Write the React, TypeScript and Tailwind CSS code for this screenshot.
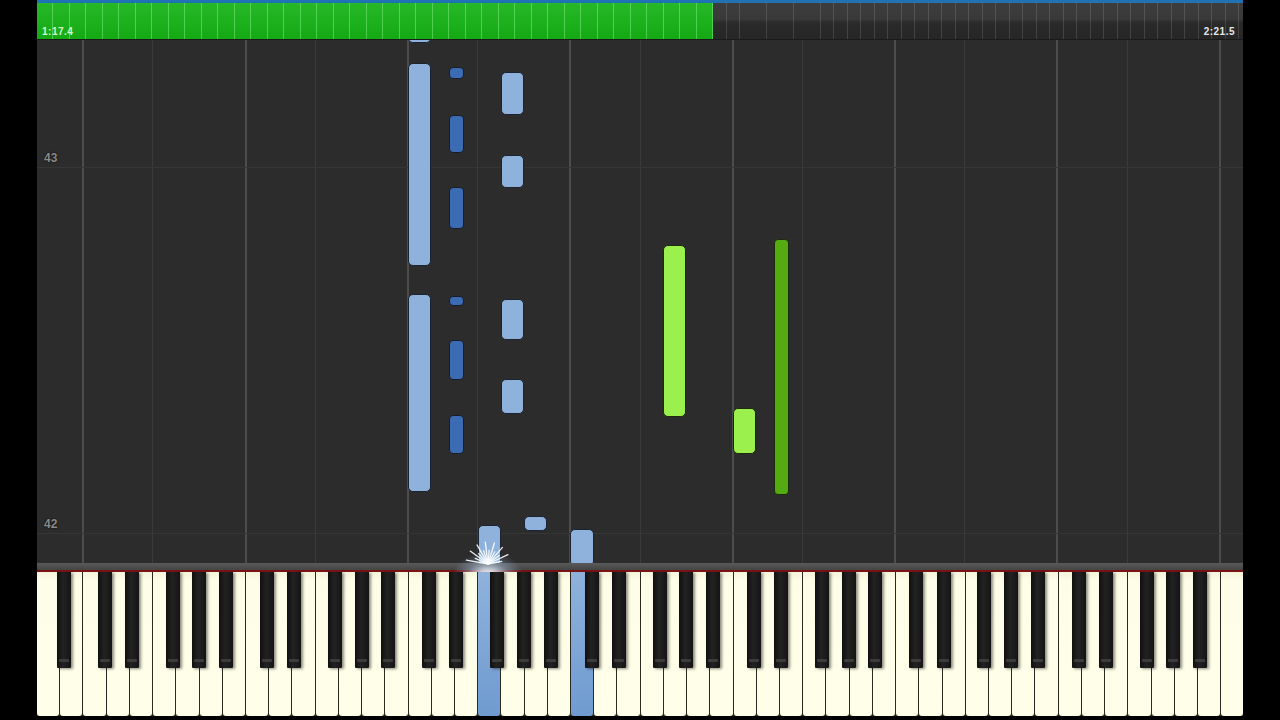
import React from "react";

const W = 1206;
const KW = W / 52;
const ROLL_TOP = 40;
const NAMES = ["A", "B", "C", "D", "E", "F", "G"];
const BLACK_OFF: Record<string, number> = { A: 3.5, C: -2, D: 2, F: -3.5, G: 0 };

type NoteDef = { kind: "white" | "black"; idx: number; top: number; bottom: number; color: string };

const LB = "light";
const DB = "dark";
const LG = "lgreen";
const DG = "dgreen";

const notes: NoteDef[] = [
  { kind: "white", idx: 16, top: 34, bottom: 43, color: LB },
  { kind: "white", idx: 16, top: 63, bottom: 266, color: LB },
  { kind: "white", idx: 16, top: 294, bottom: 492, color: LB },
  { kind: "black", idx: 17, top: 67, bottom: 79, color: DB },
  { kind: "black", idx: 17, top: 115, bottom: 153, color: DB },
  { kind: "black", idx: 17, top: 187, bottom: 229, color: DB },
  { kind: "black", idx: 17, top: 296, bottom: 306, color: DB },
  { kind: "black", idx: 17, top: 340, bottom: 380, color: DB },
  { kind: "black", idx: 17, top: 415, bottom: 454, color: DB },
  { kind: "white", idx: 20, top: 72, bottom: 115, color: LB },
  { kind: "white", idx: 20, top: 155, bottom: 188, color: LB },
  { kind: "white", idx: 20, top: 299, bottom: 340, color: LB },
  { kind: "white", idx: 20, top: 379, bottom: 414, color: LB },
  { kind: "white", idx: 19, top: 525, bottom: 566, color: LB },
  { kind: "white", idx: 21, top: 516, bottom: 531, color: LB },
  { kind: "white", idx: 23, top: 529, bottom: 566, color: LB },
  { kind: "white", idx: 27, top: 245, bottom: 417, color: LG },
  { kind: "white", idx: 30, top: 408, bottom: 454, color: LG },
  { kind: "black", idx: 31, top: 239, bottom: 495, color: DG },
];

const colorClass: Record<string, string> = {
  light: "bg-[#8fb2dc] border border-[#1b2330] rounded-[5px]",
  dark: "bg-[#3b6bb3] border border-[#161c28] rounded-[4px]",
  lgreen: "bg-[#9bf04e] border border-[#1d2a10] rounded-[5px]",
  dgreen: "bg-[#55ab12] border border-[#1b2a0c] rounded-[4px]",
};

function noteX(n: NoteDef) {
  if (n.kind === "white") return { left: n.idx * KW, width: KW };
  const c = (n.idx + 1) * KW + BLACK_OFF[NAMES[n.idx % 7]];
  return { left: c - 7.5, width: 15 };
}

const cLines = [0, 1, 2, 3, 4, 5, 6, 7].map((k) => (2 + 7 * k) * KW);
const fLines = [0, 1, 2, 3, 4, 5, 6, 7].map((k) => (5 + 7 * k) * KW).filter((x) => x < W);

const pressed = new Set([19, 23]);

function TopBar() {
  return (
    <div className="flex flex-col h-[40px]">
      <div className="h-[3px] bg-[#1f72b3]" />
      <div className="flex h-[36px]">
        <div className="relative w-[676px] h-full bg-[linear-gradient(#27b827,#14aa14)]">
          <div className="absolute inset-0 bg-[repeating-linear-gradient(90deg,transparent_0px,transparent_15.5px,rgba(160,255,160,0.4)_15.5px,rgba(160,255,160,0.4)_16.5px)]" />
          <span className="absolute left-[5px] bottom-[2px] text-[10px] font-bold leading-none tracking-[0.5px] text-[#d6f7c8] font-['Liberation_Sans',sans-serif]">
            1:17.4
          </span>
        </div>
        <div className="relative flex-1 h-full bg-[linear-gradient(#3d3d3d_0%,#393939_45%,#2a2a2a_55%,#262626_100%)]">
          <div className="absolute inset-0 bg-[repeating-linear-gradient(90deg,transparent_0px,transparent_12.5px,rgba(255,255,255,0.13)_12.5px,rgba(255,255,255,0.13)_13.5px)]" />
          <span className="absolute right-[8px] bottom-[2px] text-[10px] font-bold leading-none tracking-[0.5px] text-[#e6e6e6] font-['Liberation_Sans',sans-serif]">
            2:21.5
          </span>
        </div>
      </div>
      <div className="h-[1px] bg-[#1a1a1a]" />
    </div>
  );
}

function Glow() {
  const spikes = [-80, -66, -54, -42, -30, -18, -7, 5, 17, 29, 41, 53, 65, 79];
  return (
    <svg width="90" height="60" viewBox="0 0 90 60" className="absolute left-[406px] top-[472px] pointer-events-none">
      <defs>
        <radialGradient id="g" cx="0.5" cy="0.8" r="0.5">
          <stop offset="0" stopColor="#ffffff" stopOpacity="1" />
          <stop offset="0.25" stopColor="#eef5ff" stopOpacity="0.85" />
          <stop offset="0.6" stopColor="#b4cdee" stopOpacity="0.35" />
          <stop offset="1" stopColor="#8fb2dc" stopOpacity="0" />
        </radialGradient>
      </defs>
      <ellipse cx="45" cy="50" rx="36" ry="24" fill="url(#g)" />
      {spikes.map((a, i) => {
        const len = i % 2 === 0 ? 22 : 14;
        const rad = ((a - 90) * Math.PI) / 180;
        return (
          <line
            key={i}
            x1={45}
            y1={52}
            x2={45 + Math.cos(rad) * len}
            y2={52 + Math.sin(rad) * len}
            stroke="#ffffff"
            strokeWidth={1.3}
            strokeOpacity={0.9}
            strokeLinecap="round"
          />
        );
      })}
    </svg>
  );
}

function Roll() {
  return (
    <div className="relative h-[523px] bg-[#2c2c2c] overflow-hidden">
      {fLines.map((x, i) => (
        <div key={"f" + i} className="absolute top-0 bottom-0 w-[1px] bg-[#3a3a3a]" style={{ left: x - 0.5 }} />
      ))}
      {cLines.map((x, i) => (
        <div key={"c" + i} className="absolute top-0 bottom-0 w-[2px] bg-[#4c4c4c]" style={{ left: x - 1 }} />
      ))}
      <div className="absolute left-0 right-0 top-[127px] h-[1px] bg-[#363636]" />
      <div className="absolute left-0 right-0 top-[493px] h-[1px] bg-[#363636]" />
      <span className="absolute left-[7px] top-[109px] text-[12px] font-bold text-[#8a8a8a] font-['Liberation_Sans',sans-serif] [text-shadow:0_0_2px_#000]">
        43
      </span>
      <span className="absolute left-[7px] top-[475px] text-[12px] font-bold text-[#8a8a8a] font-['Liberation_Sans',sans-serif] [text-shadow:0_0_2px_#000]">
        42
      </span>
      {notes.map((n, i) => {
        const { left, width } = noteX(n);
        return (
          <div
            key={i}
            className={"absolute " + colorClass[n.color]}
            style={{ left, width, top: n.top - ROLL_TOP, height: n.bottom - n.top }}
          />
        );
      })}
    </div>
  );
}

function Keyboard() {
  const whites = Array.from({ length: 52 }, (_, i) => i);
  const blacks = whites.filter((i) => i < 51 && BLACK_OFF[NAMES[i % 7]] !== undefined);
  return (
    <div className="flex flex-col">
      <div className="h-[7px] bg-[linear-gradient(#5a5a5a,#444444)]" />
      <div className="h-[2px] bg-[#7a1414]" />
      <div className="relative h-[144px] flex gap-px bg-[#2a2a22]">
        {whites.map((i) => (
          <div
            key={i}
            className={
              "flex-1 h-full rounded-b-[3px] " +
              (pressed.has(i)
                ? "bg-[linear-gradient(#8fb2dc,#6f9bd0)]"
                : "bg-[linear-gradient(#f4f3dc_0%,#fefee8_6%,#fffee9_100%)]")
            }
          />
        ))}
        {blacks.map((i) => {
          const c = (i + 1) * KW + BLACK_OFF[NAMES[i % 7]];
          return (
            <div
              key={"b" + i}
              className="absolute top-0 h-[96px] w-[14px] rounded-b-[1px] bg-[linear-gradient(90deg,#101010,#222222_45%,#141414)] shadow-[2px_1px_3px_rgba(0,0,0,0.45)] flex flex-col justify-end items-center"
              style={{ left: c - 7 }}
            >
              <div className="w-[10px] h-[3px] mb-[6px] bg-[#3c3c3c] rounded-[1px]" />
            </div>
          );
        })}
      </div>
    </div>
  );
}

export default function App() {
  return (
    <div className="w-[1280px] h-[720px] bg-black flex justify-center overflow-hidden">
      <div className="w-[1206px] flex flex-col">
        <TopBar />
        <div className="relative flex flex-col">
          <Roll />
          <Keyboard />
          <Glow />
        </div>
      </div>
    </div>
  );
}
